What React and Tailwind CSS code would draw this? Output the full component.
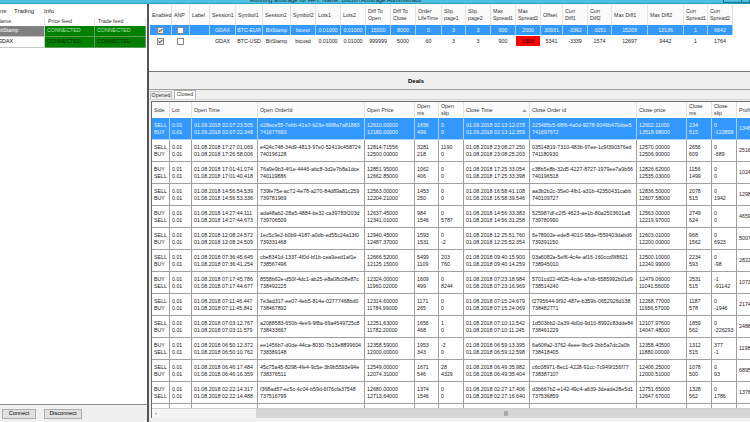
import React from 'react';
import { Check } from 'lucide-react';

const TOP_COLS = 'grid grid-cols-[22px_18px_20px_26px_27px_28px_25px_25px_25px_25px_25px_26px_24px_25px_25px_25px_22px_25px_24px_36px_36px_24px_25px]';
const DEAL_COLS = 'grid grid-cols-[18px_22px_66px_107px_50px_24px_25px_66px_107px_50px_25px_25px_40px]';

const topHeaders = [
    ['Enabled'], ['ANP'], ['Label'], ['Session1'], ['Symbol1'], ['Session2'], ['Symbol2'], ['Lots1'], ['Lots2'],
    ['Diff To', 'Open'], ['Diff To', 'Close'], ['Order', 'LifeTime'], ['Slip', 'page1'], ['Slip', 'page2'],
    ['Max', 'Spread1'], ['Max', 'Spread2'], ['Offset'], ['Curr', 'Diff1'], ['Curr', 'Diff2'], ['Max Diff1'],
    ['Max Diff2'], ['Curr', 'Spread1'], ['Curr', 'Spread2'],
];

const strategies = [
    { enabled: true, selected: true, cells: ['GDAX', 'BTC-EUR', 'BitStamp', 'btceur', '0.01000', '0.01000', '15000', '8000', '0', '3', '3', '900', '2000', '30931', '-3392', '-3251', '15209', '12136', '1', '6642'] },
    { enabled: true, selected: false, cells: ['GDAX', 'BTC-USD', 'BitStamp', 'btcusd', '0.01000', '0.01000', '999999', '5000', '60', '3', '3', '900', '1500', '5341', '-3339', '1574', '12697', '9442', '1', '1764'] },
];

const dealHeaders = [
    ['Side'], ['Lot'], ['Open Time'], ['Open OrderId'], ['Open Price'], ['Open', 'ms'], ['Open', 'slip'], ['Close Time'],
    ['Close Order id'], ['Close price'], ['Close', 'ms'], ['Close', 'slip'], ['Profit'],
];

const d1 = '01.08.2018 ';
const deals = [
    [['SELL', 'BUY'], ['01.09.2018 02:07:23.505', '01.09.2018 02:07:22.348'], ['d28ace55-7ebb-41a7-b23e-69f8a7a81883', '741677693'], ['12610.00000', '12180.00000'], ['1656', '499'], ['0', '0'], ['01.09.2018 02:13:12.078', '01.09.2018 02:13:12.359'], ['225485c5-68f6-4a0d-9278-9046b470dae5', '741697672'], ['12602.11000', '13518.98000'], ['234', '515'], ['0', '-122898'], '1346'],
    [['SELL', 'BUY'], [d1 + '17:27:01.069', d1 + '17:26:58.006'], ['e424c748-34d9-4813-97e0-52419c458724', '740196128'], ['12814.71556', '12500.00000'], ['3281', '218'], ['1190', '0'], [d1 + '23:08:27.250', d1 + '23:08:25.203'], ['03514819-7310-483b-97ee-1c9f390376ed', '741180930'], ['12570.00000', '12506.90000'], ['2656', '609'], ['0', '-689'], '2516'],
    [['BUY', 'SELL'], [d1 + '17:01:41.074', d1 + '17:01:40.418'], ['76a9e9b3-4f1e-4446-abc8-3d2e7b8a1dce', '740119886'], ['12851.95000', '12662.85000'], ['1062', '406'], ['0', '0'], [d1 + '17:25:33.054', d1 + '17:25:33.398'], ['c38b5e8b-32d5-4227-8727-1979ee7a9b56', '740196518'], ['12826.62000', '12535.03000'], ['1156', '1499'], ['0', '0'], '1024'],
    [['SELL', 'BUY'], [d1 + '14:56:54.539', d1 + '14:56:53.336'], ['739fe75e-ac72-4e78-a270-84d89a81c259', '739781969'], ['12563.00000', '12204.21000'], ['1453', '250'], ['0', '0'], [d1 + '16:58:41.108', d1 + '16:58:39.546'], ['aa3b2b2c-35e0-4fb1-a31b-42350431cabb', '740109727'], ['12836.50000', '12607.58000'], ['2078', '515'], ['0', '1942'], '1298'],
    [['BUY', 'SELL'], [d1 + '14:27:44.111', d1 + '14:27:44.673'], ['ada48ab2-28a5-4884-be32-ca39783f203d', '739706509'], ['12637.45000', '12341.01000'], ['984', '1546'], ['0', '5787'], [d1 + '14:56:33.383', d1 + '14:56:31.258'], ['525987df-c2f5-4623-ae1b-80a2503601a8', '739780990'], ['12563.00000', '12219.97000'], ['2749', '624'], ['0', '0'], '4659'],
    [['SELL', 'BUY'], [d1 + '12:08:24.572', d1 + '12:08:24.509'], ['1ec5c9e2-b0b9-4187-a0db-ed55c24a13f0', '739331468'], ['12940.45000', '12487.37000'], ['1593', '1531'], ['0', '-2'], [d1 + '12:25:51.760', d1 + '12:25:52.354'], ['6e78902e-ede8-4010-98de-f559403dabd6', '739391150'], ['12603.01000', '12200.00000'], ['968', '1562'], ['0', '6923'], '5007'],
    [['SELL', 'BUY'], [d1 + '07:36:45.645', d1 + '07:36:41.254'], ['cbe8341d-1337-4f0d-bf1b-cea9eed1af1e', '738567496'], ['12666.52000', '12125.15000'], ['5499', '1109'], ['203', '760'], [d1 + '09:40:15.900', d1 + '09:40:14.259'], ['03a6082a-5ef6-4c4e-af16-160ccd9f8621', '738945010'], ['12500.10000', '12240.99000'], ['2234', '593'], ['0', '-98'], '2822'],
    [['BUY', 'SELL'], [d1 + '07:17:45.786', d1 + '07:17:44.677'], ['8558b62e-d50f-4dc1-ab25-e8a08c08e87c', '738492225'], ['12324.00000', '11960.02000'], ['1609', '499'], ['0', '8244'], [d1 + '07:23:18.984', d1 + '07:23:16.969'], ['5701cd22-4625-4cde-a7db-6585992b01d9', '738514240'], ['12479.06000', '11041.56000'], ['2531', '515'], ['-1', '-91142'], '1073'],
    [['SELL', 'BUY'], [d1 + '07:11:46.447', d1 + '07:11:45.841'], ['7e3ad317-ee07-4eb5-814e-02777468bd0', '738467892'], ['12314.60000', '11784.99000'], ['1171', '265'], ['0', '0'], [d1 + '07:15:24.679', d1 + '07:15:24.069'], ['f2795644-9f92-487e-b359b-0652926d138', '738482771'], ['12268.77000', '11956.57000'], ['1187', '578'], ['0', '-1946'], '2174'],
    [['SELL', 'BUY'], [d1 + '07:03:12.767', d1 + '07:03:11.579'], ['a2088583-650b-4ee9-9f8a-69a4549725c8', '738433667'], ['12251.63000', '11782.20000'], ['1656', '468'], ['1', '0'], [d1 + '07:10:12.542', d1 + '07:10:11.245'], ['1d503bb2-2a39-4d0d-9d10-8992c83dde84', '738461229'], ['12107.97600', '14047.48000'], ['1859', '562'], ['0', '-226293'], '2488'],
    [['BUY', 'SELL'], [d1 + '06:50:12.372', d1 + '06:50:10.762'], ['ee1456b7-d0de-44ca-8030-7b13e8899604', '738389148'], ['12358.59000', '12000.00000'], ['1953', '343'], ['-2', '0'], [d1 + '06:59:13.395', d1 + '06:59:12.598'], ['6a60ffa2-3762-4eee-9bc9-2bb5a7dc2a0b', '738418405'], ['12358.40500', '11880.00000'], ['1312', '515'], ['377', '-1'], '1198'],
    [['SELL', 'BUY'], [d1 + '06:46:17.484', d1 + '06:46:16.359'], ['45c75a45-8298-4fe4-9c5e-3b9b5593e94e', '738376511'], ['12549.00000', '12074.31000'], ['1671', '546'], ['28', '4329'], [d1 + '06:49:35.982', d1 + '06:49:35.404'], ['c6c08971-8ec1-4228-91cc-7c949f156f77', '738387107'], ['12406.25000', '12000.51000'], ['1078', '500'], ['0', '93'], '6895'],
    [['BUY', 'SELL'], [d1 + '02:22:14.317', d1 + '02:22:14.488'], ['f368ad57-ec5c-4c04-b59d-6f76cfa37548', '737516799'], ['12680.00000', '12713.64000'], ['1374', '1546'], ['0', '0'], [d1 + '02:27:17.406', d1 + '02:27:16.640'], ['d3b667b2-e142-49c4-a639-3deade28e5d1', '737536859'], ['12751.65000', '12647.67000'], ['1328', '562'], ['0', '1786'], '1376'],
];

const CheckBox = ({ checked }) => (
    <span className={`flex h-[7px] w-[7px] items-center justify-center border border-[#8a8a8a] ${checked ? 'bg-[#e6e6e6]' : 'bg-white'}`}>
        {checked && <Check size={7} strokeWidth={4} className="text-black" />}
    </span>
);

const LeftPanel = () => (
    <div className="flex w-[149px] shrink-0 flex-col border-r-2 border-[#555555] bg-white">
        <div className="flex h-[14px] items-center text-[6px] text-[#222222]">
            <span className="w-[14px]">ns</span>
            <span className="w-[30px]">Trading</span>
            <span>Info</span>
        </div>
        <div className="-ml-[4px] grid grid-cols-[49px_50px_51px] text-[5.3px] leading-none">
            <div className="flex h-[8px] items-center border-r border-[#e3e3e3] pl-[1px] text-[#333333]">Name</div>
            <div className="flex h-[8px] items-center border-r border-[#e3e3e3] pl-[3px] text-[#333333]">Price feed</div>
            <div className="flex h-[8px] items-center border-r border-[#e3e3e3] pl-[3px] text-[#333333]">Trade feed</div>
            <div className="flex h-[11px] items-center border-r border-b border-[#c8c8c8] bg-[#808080] pl-[1px] text-white">BitStamp</div>
            <div className="flex h-[11px] items-center border-r border-b border-[#5a9c5a] bg-[#008000] pl-[2px] text-[#b5e0b5]">CONNECTED</div>
            <div className="flex h-[11px] items-center border-r border-b border-[#5a9c5a] bg-[#008000] pl-[2px] text-[#b5e0b5]">CONNECTED</div>
            <div className="flex h-[11px] items-center border-r border-b border-[#c8c8c8] bg-white pl-[2px] text-black">GDAX</div>
            <div className="flex h-[11px] items-center border-r border-b border-[#5a9c5a] bg-[#008000] pl-[2px] text-[#042c04]">CONNECTED</div>
            <div className="flex h-[11px] items-center border-r border-b border-[#5a9c5a] bg-[#008000] pl-[2px] text-[#042c04]">CONNECTED</div>
        </div>
        <div className="flex-1" />
        <div className="flex h-[18px] items-center gap-[8px] border-t border-[#8c8c8c] bg-[#f0f0f0] pl-[2px] text-[5.5px] text-black">
            <button className="h-[10px] w-[34px] border border-[#adadad] bg-[#e1e1e1] leading-none">Connect</button>
            <button className="h-[10px] w-[38px] border border-[#adadad] bg-[#e1e1e1] leading-none">Disconnect</button>
        </div>
    </div>
);

const StrategyGrid = () => (
    <div className="h-[68px] border-b border-[#777777] bg-white pt-[1px] pl-[1px] text-[5.3px] leading-[7px]">
        <div className={`${TOP_COLS} h-[20px] w-max text-[#333333]`}>
            {topHeaders.map((lines) => (
                <div key={lines.join()} className="flex flex-col justify-center border-r border-[#e3e3e3] bg-[#fbfbfb] pl-[2px] whitespace-nowrap">
                    {lines.map((line) => <span key={line}>{line}</span>)}
                </div>
            ))}
        </div>
        {strategies.map((row) => (
            <div key={row.cells[1]} className={`${TOP_COLS} mb-[1px] h-[10px] w-max ${row.selected ? 'bg-[#3399ff] text-[#e8f3ff]' : 'bg-white text-[#222222]'}`}>
                <div className={`flex items-center justify-center border-r ${row.selected ? 'border-[#a8d0ff]' : 'border-white'}`}><CheckBox checked={row.enabled} /></div>
                <div className={`flex items-center justify-center border-r ${row.selected ? 'border-[#a8d0ff]' : 'border-white'}`}><CheckBox checked={false} /></div>
                <div className={`border-r ${row.selected ? 'border-[#a8d0ff]' : 'border-white'}`} />
                {row.cells.map((cell, i) => (
                    <div
                        key={i}
                        className={`flex items-center justify-center border-r whitespace-nowrap ${row.selected ? 'border-[#a8d0ff]' : 'border-white'} ${cell === '1500' ? 'bg-[#ff0000] text-black' : ''}`}
                    >
                        {cell}
                    </div>
                ))}
            </div>
        ))}
    </div>
);

const DealsGrid = () => (
    <div className="ml-[2px] flex h-[317px] flex-col overflow-hidden border-t border-l border-[#6d6d6d] bg-white text-[5.3px] leading-[6.7px]">
        <div className={`${DEAL_COLS} h-[16px] w-max shrink-0 text-[#333333]`}>
            {dealHeaders.map((lines) => (
                <div key={lines.join()} className="relative flex flex-col justify-center border-r border-[#e3e3e3] bg-[#fbfbfb] pl-[2px] whitespace-nowrap">
                    {lines.map((line) => <span key={line}>{line}</span>)}
                    {lines[0] === 'Close Time' && (
                        <svg viewBox="0 0 5 3" className="absolute top-[7px] right-[2px] h-[3px] w-[5px]"><polygon points="0,3 2.5,0 5,3" fill="#a0a0a0" /></svg>
                    )}
                </div>
            ))}
        </div>
        {deals.map((deal, i) => (
            <div key={deal[2][1]} className={`${DEAL_COLS} h-[22px] w-max shrink-0 ${i === 0 ? 'bg-[#3399ff] text-[#e8f3ff]' : 'text-[#222222]'}`}>
                <Cell selected={i === 0} lines={deal[0]} />
                <Cell selected={i === 0} lines={['0.01', '0.01']} />
                {deal.slice(1, 11).map((lines, j) => <Cell key={j} selected={i === 0} lines={lines} />)}
                <Cell selected={i === 0} lines={[deal[11]]} />
            </div>
        ))}
        <div className={`${DEAL_COLS} min-h-0 w-max flex-1`}>
            {dealHeaders.map((lines) => <div key={lines.join()} className="border-r border-[#a0a0a0]" />)}
        </div>
        {/* horizontal scrollbar */}
        <div className="flex h-[10px] shrink-0 items-stretch border-t border-[#d0d0d0] bg-[#f0f0f0]">
            <div className="flex w-[8px] items-center justify-center bg-[#f6f6f6] text-[6px] text-[#555555]">‹</div>
            <div className="w-[96px] bg-[#f4f4f4]" />
            <div className="flex flex-1 items-center bg-[#d6d6d6] pl-[248px] text-[5px] leading-none text-[#444444]">|||</div>
        </div>
    </div>
);

const Cell = ({ lines, selected }) => (
    <div className={`flex flex-col justify-center overflow-hidden border-r border-b pl-[2px] whitespace-nowrap ${selected ? 'border-[#a8d0ff]' : 'border-[#a0a0a0]'}`}>
        {lines.map((line, i) => <span key={i}>{line}</span>)}
    </div>
);

const App = () => {
    return (
        <div className="flex h-[422px] w-[750px] flex-col overflow-hidden bg-[#f0f0f0] font-['Liberation_Sans',sans-serif]">
            {/* window title, cut off by the top of the picture */}
            <div className="flex h-[4px] items-end justify-between overflow-hidden border-b border-[#2f9fc4] bg-[#4dbfe0] text-[6px] leading-[6px] text-[#12323e]">
                <span className="pl-[250px] whitespace-nowrap">Running arbitrage for HFT. Name: Bitcoin Arbitrage Administrator</span>
                <div className="flex h-[3px] w-[27px] border-r border-b border-l border-[#1d6f8c]"><span className="w-[18px] border-r border-[#1d6f8c]" /></div>
            </div>
            <div className="flex min-h-0 flex-1">
                <LeftPanel />
                <div className="flex min-w-0 flex-1 flex-col">
                    <StrategyGrid />
                    <div className="h-[18px] shrink-0 border-b border-[#a0a0a0] pt-[6px] pl-[259px] text-[6px] leading-[7px] font-bold text-black">Deals</div>
                    <div className="flex h-[10px] shrink-0 items-end gap-[2px] border-b border-[#d4d4d4] pl-[1px] text-[5.3px] leading-none text-[#333333]">
                        <div className="flex h-[8px] w-[22px] items-center justify-center border-t border-r border-l border-[#c4c4c4] bg-[#ececec]">Opened</div>
                        <div className="flex h-[9px] w-[22px] items-center justify-center border-t border-r border-l border-[#b0b0b0] bg-white">Closed</div>
                    </div>
                    <div className="h-[1px] shrink-0" />
                    <DealsGrid />
                </div>
            </div>
        </div>
    );
};

export default App;
